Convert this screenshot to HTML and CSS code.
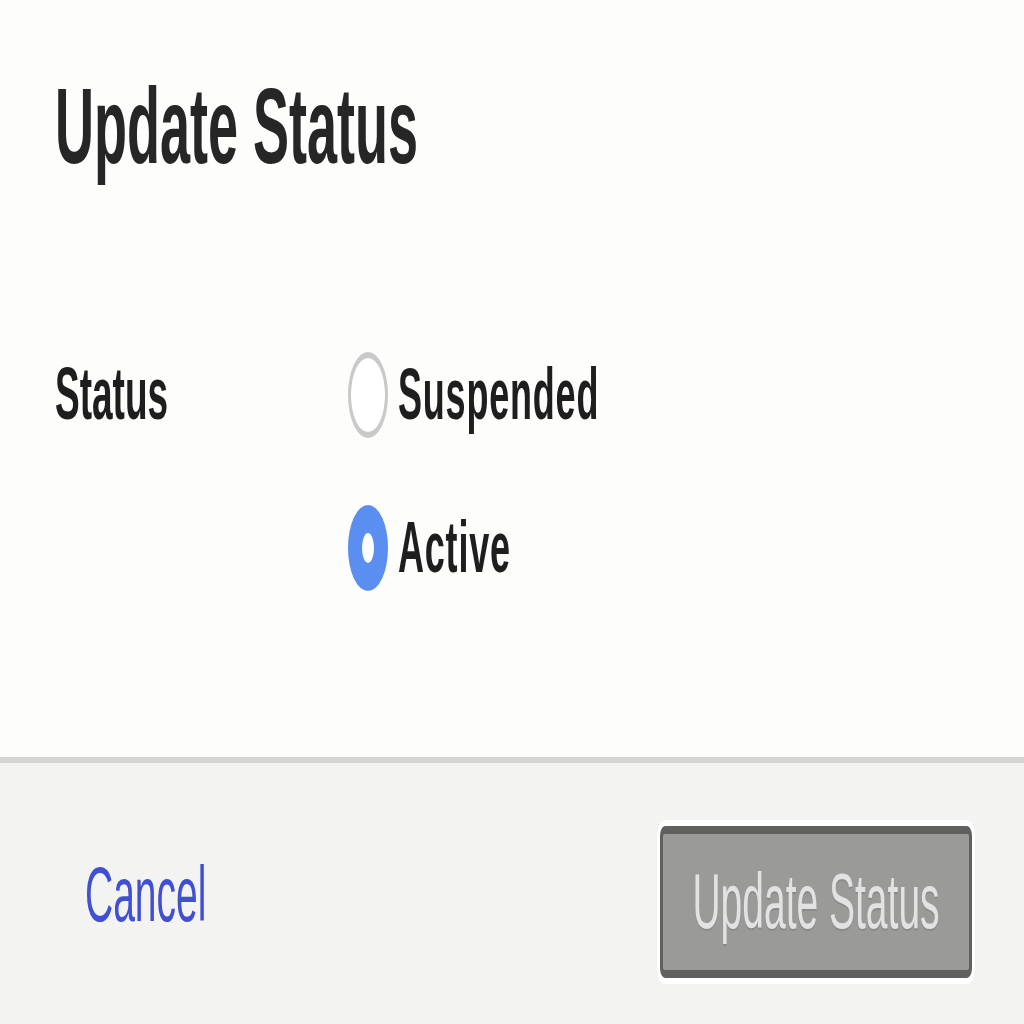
FILE: index.html
```html
<!DOCTYPE html>
<html lang="en">
<head>
  <meta charset="UTF-8">
  <meta name="viewport" content="width=device-width, initial-scale=1.0">
  <title>Update Status</title>
  <link rel="stylesheet" href="styles.css">
</head>
<body>
  <div class="dialog">
    <!-- Dialog body -->
    <div class="dialog-body">
      <h1 class="dialog-title">Update Status</h1>

      <form class="form-row" id="statusForm">
        <div class="form-label"><span class="tall">Status</span></div>
        <div class="options">
          <label class="option">
            <input type="radio" name="status" value="suspended" class="radio">
            <span class="tall">Suspended</span>
          </label>
          <label class="option">
            <input type="radio" name="status" value="active" class="radio" checked>
            <span class="tall">Active</span>
          </label>
        </div>
      </form>
    </div>

    <!-- Footer with actions -->
    <div class="dialog-footer">
      <a href="#" class="cancel-link"><span class="tall">Cancel</span></a>
      <button class="submit-btn" disabled><span class="tall">Update Status</span></button>
    </div>
  </div>
</body>
</html>
```

FILE: styles.css
```css
/* Global Reset */
* {
  margin: 0;
  padding: 0;
  box-sizing: border-box;
  font-family: 'Liberation Sans', Arial, sans-serif;
}

html, body {
  overflow: hidden;
}

body {
  background-color: #f3f4f2;
  color: #1e1e1e;
}

/* Text in the screenshot is stretched to twice its height */
.tall {
  display: inline-block;
  transform: scaleY(2);
}

.dialog {
  width: 1024px;
  height: 1024px;
  display: flex;
  flex-direction: column;
}

/* Body section */
.dialog-body {
  height: 757px;
  background-color: #fdfdfb;
  padding: 71px 0 0 55px;
}

.dialog-title {
  font-size: 54px;
  line-height: 108px;
  font-weight: 700;
  color: #262626;
  transform: scaleY(2);
  transform-origin: left center;
}

/* Status row */
.form-row {
  display: flex;
  margin-top: 173px;
}

.form-label {
  width: 293px;
  font-size: 37px;
  line-height: 86px;
  font-weight: 700;
}

.options {
  display: flex;
  flex-direction: column;
  gap: 67px;
}

.option {
  display: flex;
  align-items: center;
  gap: 10px;
  font-size: 36px;
  line-height: 86px;
  font-weight: 700;
  letter-spacing: 0.8px;
  cursor: pointer;
}

.radio {
  appearance: none;
  width: 40px;
  height: 86px;
  border-radius: 50%;
  border-style: solid;
  border-color: #c9c9c9;
  border-width: 6px 3px;
  background-color: #fff;
  margin: 0;
}

.radio:checked {
  border-color: #5b8ef1;
  border-width: 28px 14px;
}

/* Footer */
.dialog-footer {
  flex: 1;
  border-top: 6px solid #d6d6d4;
  background-color: #f3f4f2;
  display: flex;
  align-items: center;
  justify-content: space-between;
  padding: 17px 52px 0 85px;
}

.cancel-link {
  font-size: 39px;
  line-height: 78px;
  color: #4050d2;
  text-decoration: none;
  margin-bottom: 14px;
}

.submit-btn {
  width: 312px;
  height: 152px;
  background-color: #9a9a98;
  border-style: solid;
  border-color: #60615f;
  border-width: 8px 3px;
  border-radius: 5px / 10px;
  box-shadow: 0 0 0 3px #fff, 0 -4px 0 2px #fff, 0 4px 0 2px #fff;
  color: #e2e2e2;
  font-size: 39px;
  line-height: 78px;
  text-shadow: 0 1px 0 #8a8a88;
}
```
